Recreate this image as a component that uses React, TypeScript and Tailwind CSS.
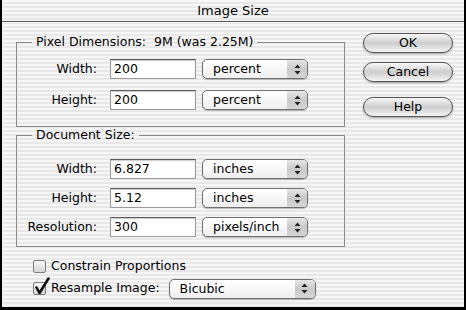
import React from "react";

function Arrows() {
  return (
    <svg width="7" height="11" viewBox="0 0 7 11" className="block">
      <path d="M3.5 0.5 L6.5 4 L0.5 4 Z" fill="#222" />
      <path d="M3.5 10.5 L6.5 7 L0.5 7 Z" fill="#222" />
    </svg>
  );
}

function Popup({ label, width }: { label: string; width: string }) {
  return (
    <div
      className={`${width} flex h-[20px] overflow-hidden rounded-[5px] border border-[#6f6f6f] bg-gradient-to-b from-white to-[#efefef] shadow-[0_1px_1px_rgba(0,0,0,0.25)]`}
    >
      <span className="flex-1 pl-[10px] leading-[18px]">{label}</span>
      <span className="flex w-[20px] items-center justify-center bg-gradient-to-b from-[#e6e6e6] via-[#c9c9c9] to-[#d6d6d6]">
        <Arrows />
      </span>
    </div>
  );
}

function Field({ value }: { value: string }) {
  return (
    <div className="h-[20px] w-[86px] border border-[#9a9a9a] border-t-[#5a5a5a] bg-white pl-[3px] leading-[18px] shadow-[inset_0_1px_1px_rgba(0,0,0,0.2)]">
      {value}
    </div>
  );
}

function Row({ label, value, unit }: { label: string; value: string; unit: string }) {
  return (
    <div className="flex items-center">
      <span className="w-[80px] text-right">{label}</span>
      <div className="ml-[13px]">
        <Field value={value} />
      </div>
      <div className="ml-[6px]">
        <Popup label={unit} width="w-[106px]" />
      </div>
    </div>
  );
}

function Button({ label }: { label: string }) {
  return (
    <button className="flex h-[20px] w-[90px] items-center justify-center rounded-full border border-[#555] bg-gradient-to-b from-[#fafafa] via-[#cdcdcd] to-[#f4f4f4] leading-none text-black shadow-[0_1px_2px_rgba(0,0,0,0.35)]">
      {label}
    </button>
  );
}

function Checkbox({ checked }: { checked?: boolean }) {
  return (
    <span className="relative block h-[13px] w-[13px] rounded-[2px] border border-[#7c7c7c] bg-gradient-to-b from-[#f6f6f6] to-[#d6d6d6]">
      {checked && (
        <svg
          width="16"
          height="18"
          viewBox="0 0 16 18"
          className="absolute left-[0px] top-[-6px]"
        >
          <path
            d="M2.5 10.5 L5.5 16 L14.5 1.5"
            fill="none"
            stroke="#111"
            strokeWidth="2.6"
            strokeLinecap="round"
            strokeLinejoin="round"
          />
        </svg>
      )}
    </span>
  );
}

export default function App() {
  return (
    <div className="h-[310px] w-[466px] overflow-hidden border-x-2 border-b-[3px] border-black bg-[repeating-linear-gradient(180deg,#f6f6f6_0px,#f6f6f6_2px,#e8e8e8_2px,#e8e8e8_4px)] font-['DejaVu_Sans',sans-serif] text-[12.5px] text-black">
      {/* Title bar */}
      <div className="flex h-[22px] items-center justify-center border-b border-[#555] text-[13px] shadow-[0_1px_0_#fafafa]">
        Image Size
      </div>

      <div className="flex">
        {/* Left column */}
        <div className="ml-[14px] flex w-[329px] flex-col">
          <fieldset className="mt-[13px] border border-[#8a8a8a] pb-[16px]">
            <legend className="ml-[15px] px-[4px] leading-[14px]">
              Pixel Dimensions:&nbsp; 9M (was 2.25M)
            </legend>
            <div className="mt-[10px] flex flex-col gap-[11px]">
              <Row label="Width:" value="200" unit="percent" />
              <Row label="Height:" value="200" unit="percent" />
            </div>
          </fieldset>

          <fieldset className="mt-[1px] border border-[#8a8a8a] pb-[9px]">
            <legend className="ml-[15px] px-[4px] leading-[14px]">Document Size:</legend>
            <div className="mt-[17px] flex flex-col gap-[9px]">
              <Row label="Width:" value="6.827" unit="inches" />
              <Row label="Height:" value="5.12" unit="inches" />
              <Row label="Resolution:" value="300" unit="pixels/inch" />
            </div>
          </fieldset>

          <div className="mt-[10px] flex items-center gap-[5px] pl-[17px]">
            <Checkbox />
            <span>Constrain Proportions</span>
          </div>
          <div className="mt-[3px] flex items-center gap-[5px] pl-[17px]">
            <Checkbox checked />
            <span>Resample Image:</span>
            <div className="ml-[4px]">
              <Popup label="Bicubic" width="w-[147px]" />
            </div>
          </div>
        </div>

        {/* Buttons */}
        <div className="ml-[18px] flex flex-col pt-[11px]">
          <Button label="OK" />
          <div className="mt-[9px]">
            <Button label="Cancel" />
          </div>
          <div className="mt-[15px]">
            <Button label="Help" />
          </div>
        </div>
      </div>
    </div>
  );
}
